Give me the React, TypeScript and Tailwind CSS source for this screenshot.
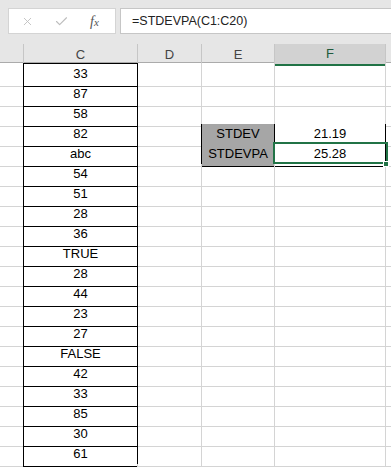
import { X, Check } from "lucide-react";

const values = [
  "33", "87", "58", "82", "abc", "54", "51", "28", "36", "TRUE",
  "28", "44", "23", "27", "FALSE", "42", "33", "85", "30", "61",
];

const stats: Record<number, [string, string]> = {
  3: ["STDEV", "21.19"],
  4: ["STDEVPA", "25.28"],
};

const grid = "grid grid-cols-[24px_114px_64px_73px_111px_1fr]";
const font = { fontFamily: '"Liberation Sans", Arial, sans-serif' };

function Row({ i }: { i: number }) {
  const v = values[i];
  const s = stats[i];
  const first = i === 0;
  const h = first ? "h-[21px]" : "h-[20px]";
  const gray = "border-r border-b border-[#d4d4d4]";
  return (
    <div className={`${grid} ${h}`}>
      <div className="border-r border-r-black border-b border-b-[#d4d4d4]" />
      <div
        className={`flex items-end justify-center pb-[2px] border-r border-b border-black ${
          first ? "border-t" : ""
        } ${v === undefined ? "border-b-[#d4d4d4] border-r-[#d4d4d4]" : ""}`}
      >
        {v}
      </div>
      <div className={`${gray} ${s ? "border-r-black" : ""}`} />
      {s ? (
        <div className="flex items-end justify-center pb-[2px] bg-[#a6a6a6] border-r border-b border-black">
          {s[0]}
        </div>
      ) : (
        <div className={`${gray} ${i === 2 ? "border-b-black" : ""}`} />
      )}
      {s ? (
        <div className="flex items-end justify-center pb-[2px] bg-white border-r border-b border-black">
          {s[1]}
        </div>
      ) : (
        <div className={`${gray} ${i === 2 ? "border-b-black" : ""}`} />
      )}
      <div className="border-b border-[#d4d4d4]" />
    </div>
  );
}

export default function App() {
  return (
    <div className="relative w-[391px] h-[467px] overflow-hidden bg-white text-[13px] text-black" style={font}>
      <div className="h-[43px] bg-[#e6e6e6] pt-[8px] flex">
        <div className="ml-[8px] w-[108px] h-[26px] bg-white border border-[#d4d4d4] flex items-center">
          <X size={13} strokeWidth={1.6} className="ml-[12px] text-[#bdbdbd]" />
          <Check size={15} strokeWidth={1.8} className="ml-[20px] text-[#bdbdbd]" />
          <span className="ml-[21px] italic text-[#555] text-[14px]" style={{ fontFamily: '"Liberation Serif", serif' }}>
            f<span className="text-[11px]">x</span>
          </span>
        </div>
        <div className="ml-[4px] flex-1 h-[26px] bg-white border-y border-l border-[#c6c6c6] flex items-center pl-[11px] text-[12.5px] text-[#222]">
          =STDEVPA(C1:C20)
        </div>
      </div>
      <div className={`${grid} h-[20px] bg-[#e6e6e6] border-b border-[#ababab] text-[#444] text-[13px]`}>
        <div className="mt-[1px] border-r border-[#c6c6c6]" />
        <div className="mt-[1px] flex items-center justify-center border-r border-[#c6c6c6]">C</div>
        <div className="mt-[1px] flex items-center justify-center border-r border-[#c6c6c6]">D</div>
        <div className="mt-[1px] flex items-center justify-center border-r border-[#c6c6c6]">E</div>
        <div className="mt-[1px] flex items-center justify-center bg-[#d2d2d2] border-r border-[#c6c6c6] border-b-2 border-b-[#217346] text-[#215a3c]">
          F
        </div>
        <div className="mt-[1px]" />
      </div>
      {Array.from({ length: 21 }, (_, i) => (
        <Row key={i} i={i} />
      ))}
      <div className="absolute left-[273px] top-[142px] w-[115px] h-[22px] border-2 border-[#217346]" />
      <div className="absolute left-[383px] top-[161px] w-[6px] h-[6px] bg-[#217346] border border-white" />
    </div>
  );
}
